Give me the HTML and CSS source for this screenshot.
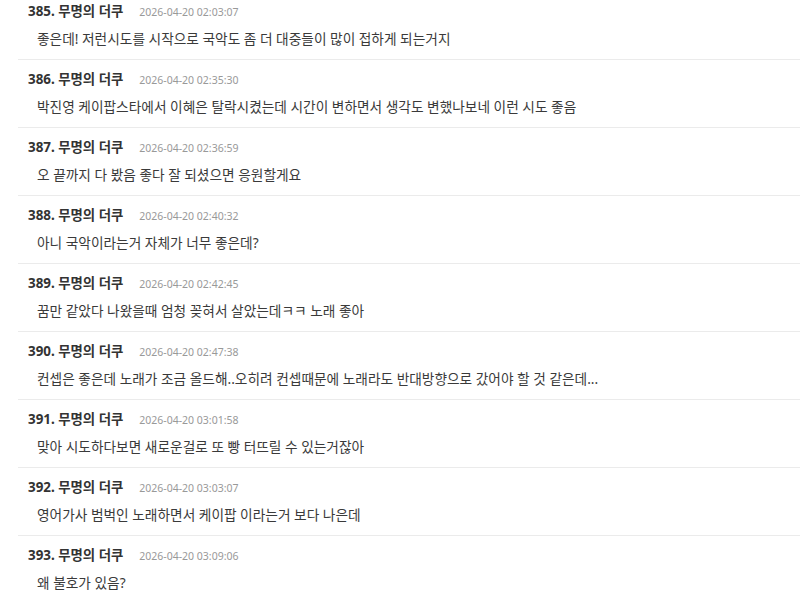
FILE: index.html
```html
<!DOCTYPE html>
<html lang="ko">
<head>
<meta charset="utf-8">
<title>댓글</title>
<link rel="stylesheet" href="styles.css">
</head>
<body>
<ul class="comments">
  <li class="comment">
    <div class="meta"><span class="name">385. 무명의 더쿠</span><span class="date">2026-04-20 02:03:07</span></div>
    <p class="text">좋은데! 저런시도를 시작으로 국악도 좀 더 대중들이 많이 접하게 되는거지</p>
  </li>
  <li class="comment">
    <div class="meta"><span class="name">386. 무명의 더쿠</span><span class="date">2026-04-20 02:35:30</span></div>
    <p class="text">박진영 케이팝스타에서 이혜은 탈락시켰는데 시간이 변하면서 생각도 변했나보네 이런 시도 좋음</p>
  </li>
  <li class="comment">
    <div class="meta"><span class="name">387. 무명의 더쿠</span><span class="date">2026-04-20 02:36:59</span></div>
    <p class="text">오 끝까지 다 봤음 좋다 잘 되셨으면 응원할게요</p>
  </li>
  <li class="comment">
    <div class="meta"><span class="name">388. 무명의 더쿠</span><span class="date">2026-04-20 02:40:32</span></div>
    <p class="text">아니 국악이라는거 자체가 너무 좋은데?</p>
  </li>
  <li class="comment">
    <div class="meta"><span class="name">389. 무명의 더쿠</span><span class="date">2026-04-20 02:42:45</span></div>
    <p class="text">꿈만 같았다 나왔을때 엄청 꽂혀서 살았는데ㅋㅋ 노래 좋아</p>
  </li>
  <li class="comment">
    <div class="meta"><span class="name">390. 무명의 더쿠</span><span class="date">2026-04-20 02:47:38</span></div>
    <p class="text">컨셉은 좋은데 노래가 조금 올드해..오히려 컨셉때문에 노래라도 반대방향으로 갔어야 할 것 같은데...</p>
  </li>
  <li class="comment">
    <div class="meta"><span class="name">391. 무명의 더쿠</span><span class="date">2026-04-20 03:01:58</span></div>
    <p class="text">맞아 시도하다보면 새로운걸로 또 빵 터뜨릴 수 있는거잖아</p>
  </li>
  <li class="comment">
    <div class="meta"><span class="name">392. 무명의 더쿠</span><span class="date">2026-04-20 03:03:07</span></div>
    <p class="text">영어가사 범벅인 노래하면서 케이팝 이라는거 보다 나은데</p>
  </li>
  <li class="comment">
    <div class="meta"><span class="name">393. 무명의 더쿠</span><span class="date">2026-04-20 03:09:06</span></div>
    <p class="text">왜 불호가 있음?</p>
  </li>
</ul>
</body>
</html>
```

FILE: styles.css
```css
html, body {
  margin: 0;
  padding: 0;
  background: #ffffff;
}
body {
  font-family: "Noto Sans", "Noto Sans CJK KR", sans-serif;
  color: #333333;
  overflow: hidden;
}
.comments {
  list-style: none;
  margin: 0;
  padding: 0 0 0 18px;
}
.comment {
  padding: 10px 0 10px 10px;
  border-bottom: 1px solid #ebebeb;
}
.comment:first-child {
  padding-top: 2px;
}
.meta {
  display: flex;
  align-items: baseline;
  gap: 16px;
  height: 18px;
  line-height: 18px;
}
.name {
  font-size: 13.4px;
  font-weight: 700;
  color: #333333;
}
.date {
  font-size: 10.5px;
  color: #999999;
}
.text {
  margin: 9px 0 0 9px;
  font-size: 13.7px;
  line-height: 20px;
  color: #3a3a3a;
  white-space: nowrap;
}
```
